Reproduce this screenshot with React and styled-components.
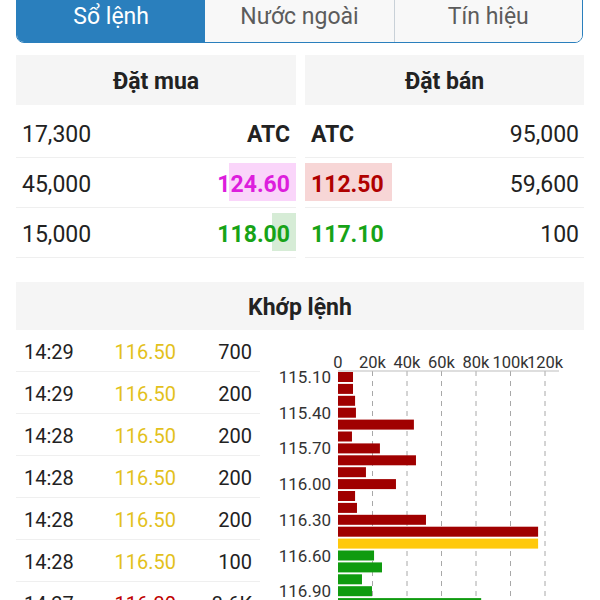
import React from "react";
import styled, { createGlobalStyle } from "styled-components";

const GlobalStyle = createGlobalStyle`
  html, body { margin: 0; padding: 0; overflow: hidden; background: #fff; }
  body { font-family: Roboto, "Noto Sans", "Liberation Sans", sans-serif; color: #222; }
  * { box-sizing: border-box; }
`;

const Page = styled.div`
  width: 600px;
  height: 600px;
  overflow: hidden;
  padding: 0 16px;
`;

const TabBar = styled.div`
  margin-top: -11px;
  width: 567px;
  height: 54px;
  display: grid;
  grid-template-columns: repeat(3, 1fr);
  border: 1px solid #2a7fbd;
  border-radius: 0 0 8px 8px;
  overflow: hidden;
`;

const Tab = styled.div`
  display: flex;
  align-items: center;
  justify-content: center;
  font-size: 23px;
  background: ${(p) => (p.$active ? "#2a7fbd" : "#f8f8f8")};
  color: ${(p) => (p.$active ? "#ffffff" : "#5c5c5c")};
  border-left: ${(p) => (p.$divider ? "1px solid #c9d1d8" : "none")};
`;

const OrderBook = styled.div`
  margin-top: 12px;
  display: grid;
  grid-template-columns: 280px 279px;
  column-gap: 9px;
`;

const Side = styled.div`
  display: flex;
  flex-direction: column;
`;

const SectionHeader = styled.div`
  height: ${(p) => p.$h || 50}px;
  display: flex;
  align-items: center;
  justify-content: center;
  padding-top: 2px;
  background: #f5f5f5;
  font-weight: 700;
  font-size: 23px;
  color: #222;
`;

const BookRows = styled.div`
  margin-top: 3px;
`;

const BookRow = styled.div`
  position: relative;
  height: 50px;
  display: flex;
  align-items: center;
  justify-content: space-between;
  padding: 3px ${(p) => (p.$sell ? "5px 0 6px" : "6px 0")};
  border-bottom: 1px solid #efefef;
  font-size: 23px;
`;

const Vol = styled.span`
  position: relative;
  z-index: 1;
  color: #222;
`;

const Price = styled.span`
  position: relative;
  z-index: 1;
  font-weight: 700;
  color: ${(p) => p.$color || "#222"};
`;

const VolBar = styled.div`
  position: absolute;
  top: 5px;
  height: 38px;
  ${(p) => (p.$sell ? "left: 0;" : "right: 0;")}
  background: ${(p) => p.$bg};
`;

const MatchHeader = styled(SectionHeader)`
  margin-top: 24px;
`;

const MatchBody = styled.div`
  display: grid;
  grid-template-columns: 244px 1fr;
  align-items: start;
`;

const TradeList = styled.div`
  display: flex;
  flex-direction: column;
`;

const TradeRow = styled.div`
  height: 42px;
  display: grid;
  grid-template-columns: repeat(3, 1fr);
  align-items: center;
  padding: 2px 8px 0;
  border-bottom: 1px solid #efefef;
  font-size: 20px;
`;

const Cell = styled.span`
  text-align: ${(p) => p.$align || "left"};
  color: ${(p) => p.$color || "#222"};
`;

const ChartSvg = styled.svg`
  display: block;
  font-family: Roboto, "Noto Sans", sans-serif;
`;

const C = {
  ceil: "#dd1edd",
  down: "#b00000",
  up: "#17a317",
  ref: "#e3c11c",
};

const buys = [
  { vol: "17,300", price: "ATC" },
  { vol: "45,000", price: "124.60", color: C.ceil, bg: "#fad5fa", n: 45000 },
  { vol: "15,000", price: "118.00", color: C.up, bg: "#d6ecd6", n: 16000 },
];
const sells = [
  { vol: "95,000", price: "ATC" },
  { vol: "59,600", price: "112.50", color: C.down, bg: "#f7d6d6", n: 59600 },
  { vol: "100", price: "117.10", color: C.up },
];

const trades = [
  ["14:29", "116.50", "700", C.ref],
  ["14:29", "116.50", "200", C.ref],
  ["14:28", "116.50", "200", C.ref],
  ["14:28", "116.50", "200", C.ref],
  ["14:28", "116.50", "200", C.ref],
  ["14:28", "116.50", "100", C.ref],
  ["14:27", "116.30", "3.6K", "#c00000"],
];

const barVals = [
  8.7, 8.7, 9.9, 10.4, 44, 8.1, 24.3, 45.2, 16.2, 33.6, 9.9, 11, 51, 116, 116,
  20.9, 25.5, 13.9, 19.7, 83, 30, 12,
];

function Chart() {
  const x0 = 78;
  const perK = 1.725;
  const top = 42;
  const step = 11.9;
  const ticks = [0, 20, 40, 60, 80, 100, 120];
  return (
    <ChartSvg width="324" height="290" viewBox="0 0 324 290">
      {ticks.slice(1).map((t) => (
        <line
          key={t}
          x1={x0 + t * perK}
          x2={x0 + t * perK}
          y1={41}
          y2={290}
          stroke="#a8a8a8"
          strokeWidth="1"
          strokeDasharray="5 5"
        />
      ))}
      <line x1={x0} x2={299} y1={41} y2={41} stroke="#bdbdbd" strokeWidth="1" />
      {ticks.map((t) => (
        <text
          key={t}
          x={x0 + t * perK}
          y={32}
          textAnchor="middle"
          dominantBaseline="central"
          fontSize="16.5"
          fill="#333"
        >
          {t === 0 ? "0" : `${t}k`}
        </text>
      ))}
      {barVals.map((v, i) => {
        const price = 115.1 + i * 0.1;
        const fill =
          i < 14 ? "#a00000" : i === 14 ? "#ffc90d" : "#0f9b0f";
        const y = top + i * step;
        return (
          <g key={i}>
            <rect x={x0} y={y} width={v * perK} height={10} fill={fill} />
            {i % 3 === 0 && (
              <text
                x={71}
                y={y + 5}
                textAnchor="end"
                dominantBaseline="central"
                fontSize="17"
                fill="#333"
              >
                {price.toFixed(2)}
              </text>
            )}
          </g>
        );
      })}
    </ChartSvg>
  );
}

export default function App() {
  return (
    <Page>
      <GlobalStyle />
      <TabBar>
        <Tab $active>Sổ lệnh</Tab>
        <Tab>Nước ngoài</Tab>
        <Tab $divider>Tín hiệu</Tab>
      </TabBar>

      <OrderBook>
        <Side>
          <SectionHeader>Đặt mua</SectionHeader>
          <BookRows>
            {buys.map((r, i) => (
              <BookRow key={i}>
                {r.bg && <VolBar $bg={r.bg} style={{ width: `${r.n * 0.00148}px` }} />}
                <Vol>{r.vol}</Vol>
                <Price $color={r.color}>{r.price}</Price>
              </BookRow>
            ))}
          </BookRows>
        </Side>
        <Side>
          <SectionHeader>Đặt bán</SectionHeader>
          <BookRows>
            {sells.map((r, i) => (
              <BookRow key={i} $sell>
                {r.bg && (
                  <VolBar $sell $bg={r.bg} style={{ width: `${r.n * 0.00146}px` }} />
                )}
                <Price $color={r.color}>{r.price}</Price>
                <Vol>{r.vol}</Vol>
              </BookRow>
            ))}
          </BookRows>
        </Side>
      </OrderBook>

      <MatchHeader $h={48}>Khớp lệnh</MatchHeader>
      <MatchBody>
        <TradeList>
          {trades.map(([t, p, v, c], i) => (
            <TradeRow key={i}>
              <Cell>{t}</Cell>
              <Cell $align="right" $color={c}>{p}</Cell>
              <Cell $align="right">{v}</Cell>
            </TradeRow>
          ))}
        </TradeList>
        <Chart />
      </MatchBody>
    </Page>
  );
}
